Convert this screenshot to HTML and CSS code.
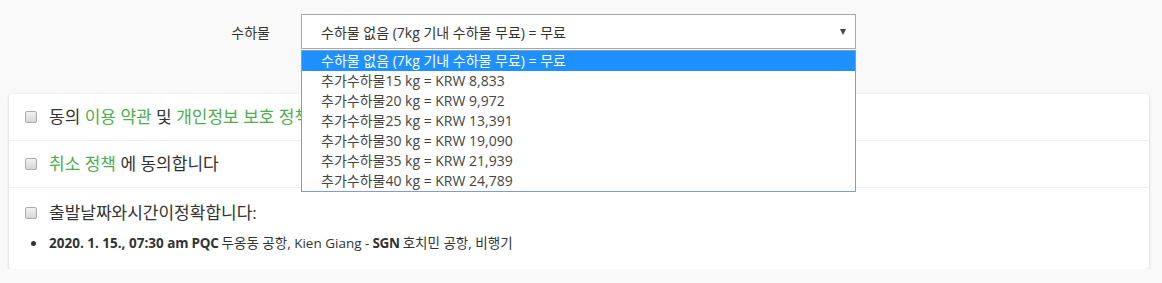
FILE: index.html
```html
<!DOCTYPE html>
<html>
<head>
  <meta charset="UTF-8">
  <title>수하물</title>
  <link rel="stylesheet" href="styles.css">
</head>
<body>
  <div class="form-row">
    <label class="form-label">수하물</label>
    <div class="select-wrap">
      <div class="select">
        <span>수하물 없음 (7kg 기내 수하물 무료) = 무료</span>
        <span class="arrow"></span>
      </div>
      <ul class="dropdown">
        <li class="selected">수하물 없음 (7kg 기내 수하물 무료) = 무료</li>
        <li>추가수하물15 kg = KRW 8,833</li>
        <li>추가수하물20 kg = KRW 9,972</li>
        <li>추가수하물25 kg = KRW 13,391</li>
        <li>추가수하물30 kg = KRW 19,090</li>
        <li>추가수하물35 kg = KRW 21,939</li>
        <li>추가수하물40 kg = KRW 24,789</li>
      </ul>
    </div>
  </div>

  <div class="card">
    <div class="card-row">
      <div class="check-line">
        <span class="checkbox"></span>
        <span>동의 <a href="#">이용 약관</a> 및 <a href="#">개인정보 보호 정책</a></span>
      </div>
    </div>
    <div class="card-row">
      <div class="check-line">
        <span class="checkbox"></span>
        <span><a href="#">취소 정책</a> 에 동의합니다</span>
      </div>
    </div>
    <div class="card-row last">
      <div class="check-line">
        <span class="checkbox"></span>
        <span>출발날짜와시간이정확합니다:</span>
      </div>
      <ul class="flights">
        <li><b>2020. 1. 15., 07:30 am</b> <b class="code">PQC</b> 두옹동 공항, Kien Giang - <b class="code">SGN</b> 호치민 공항, 비행기</li>
      </ul>
    </div>
  </div>
</body>
</html>
```

FILE: styles.css
```css
body {
  margin: 0;
  background-color: #f9f9f9;
  font-family: "Open Sans", "Noto Sans CJK KR", sans-serif;
  font-size: 14px;
  color: #333;
}
.form-row {
  display: flex;
  align-items: center;
  padding-top: 14px;
  position: relative;
  z-index: 2;
}
.form-label {
  width: 301px;
  box-sizing: border-box;
  padding-right: 31px;
  text-align: right;
  font-size: 14px;
  color: #333;
}
.select-wrap {
  position: relative;
  width: 555px;
}
.select {
  height: 35px;
  box-sizing: border-box;
  border: 1px solid #a9a9a9;
  background-color: #fff;
  display: flex;
  align-items: center;
  justify-content: space-between;
  padding: 0 9px 0 19px;
}
.arrow {
  width: 0;
  height: 0;
  border-left: 3px solid transparent;
  border-right: 3px solid transparent;
  border-top: 6px solid #444;
}
.dropdown {
  position: absolute;
  top: 36px;
  left: 0;
  width: 555px;
  box-sizing: border-box;
  margin: 0;
  padding: 0;
  list-style: none;
  background-color: #fff;
  border: 1px solid #7d9bd6;
}
.dropdown li {
  height: 20px;
  line-height: 20px;
  padding-left: 19px;
  color: #444;
}
.dropdown li.selected {
  background-color: #1e90ff;
  color: #fff;
}
.card {
  margin: 45px 13px 0 9px;
  background-color: #fff;
  border-radius: 3px;
  box-shadow: 0 1px 3px rgba(0, 0, 0, 0.2);
  position: relative;
  z-index: 1;
}
.card-row {
  height: 46px;
  padding: 0 16px;
  display: flex;
  flex-direction: column;
  justify-content: center;
  border-bottom: 1px solid #eee;
}
.card-row.last {
  height: 81px;
  border-bottom: none;
  justify-content: flex-start;
  padding-top: 15px;
  box-sizing: border-box;
}
.check-line {
  display: flex;
  align-items: center;
  font-size: 17px;
  line-height: 20px;
  color: #333;
}
.check-line a {
  color: #4cae4c;
  text-decoration: none;
}
.checkbox {
  width: 10px;
  height: 10px;
  border: 1px solid #adadad;
  border-radius: 2px;
  background: linear-gradient(#f2f2f2, #d6d6d6);
  margin-right: 12px;
  flex-shrink: 0;
}
.flights {
  margin: 11px 0 0 0;
  padding: 0;
  list-style: none;
  font-size: 13.5px;
  color: #333;
}
.flights li {
  display: flex;
  align-items: center;
  gap: 3px;
  line-height: 18px;
}
.flights li::before {
  content: "";
  width: 5px;
  height: 5px;
  border-radius: 50%;
  background-color: #333;
  margin: 0 10px 0 6px;
}
.flights b {
  font-weight: 700;
}
.flights .code {
  letter-spacing: -0.3px;
}
```
